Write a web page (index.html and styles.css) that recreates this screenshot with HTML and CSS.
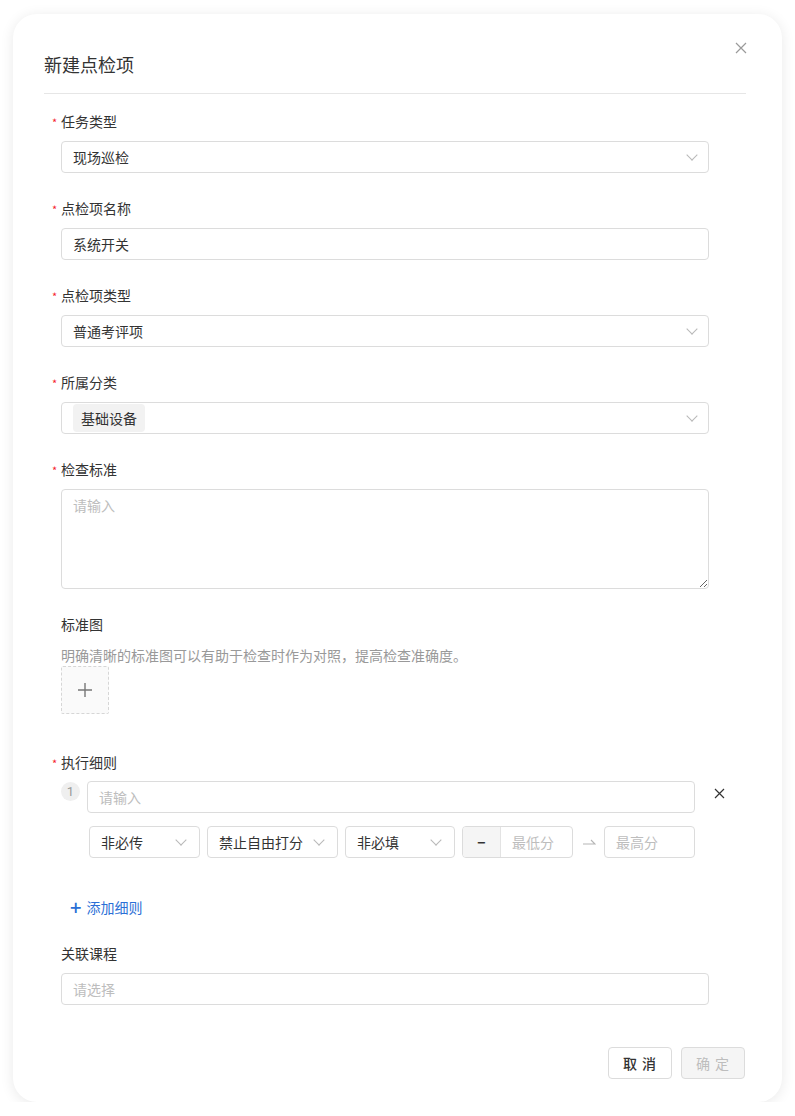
FILE: index.html
```html
<!DOCTYPE html>
<html lang="zh-CN">
<head>
<meta charset="utf-8">
<title>新建点检项</title>
<link rel="stylesheet" href="styles.css">
</head>
<body>
<div class="modal">
  <div class="modal-header">
    <h1 class="title">新建点检项</h1>
    <button class="close" aria-label="关闭">
      <svg width="12" height="12" viewBox="0 0 12 12"><path d="M1 1L11 11M11 1L1 11" stroke="#9a9a9a" stroke-width="1.2" fill="none"/></svg>
    </button>
  </div>
  <div class="form">
    <div class="field">
      <div class="label required">任务类型</div>
      <div class="control select"><span class="value">现场巡检</span><span class="chev"></span></div>
    </div>
    <div class="field">
      <div class="label required">点检项名称</div>
      <div class="control"><span class="value">系统开关</span></div>
    </div>
    <div class="field">
      <div class="label required">点检项类型</div>
      <div class="control select"><span class="value">普通考评项</span><span class="chev"></span></div>
    </div>
    <div class="field">
      <div class="label required">所属分类</div>
      <div class="control select tagbox"><span class="tag">基础设备</span><span class="chev"></span></div>
    </div>
    <div class="field">
      <div class="label required">检查标准</div>
      <textarea class="textarea" placeholder="请输入"></textarea>
    </div>
    <div class="field field-upload">
      <div class="label">标准图</div>
      <div class="desc">明确清晰的标准图可以有助于检查时作为对照，提高检查准确度。</div>
      <div class="upload">
        <svg width="16" height="16" viewBox="0 0 16 16"><path d="M8 1V15M1 8H15" stroke="#777" stroke-width="1.4" fill="none"/></svg>
      </div>
    </div>
    <div class="field field-rules">
      <div class="label required">执行细则</div>
      <div class="rule">
        <div class="rule-head">
          <span class="badge">1</span>
          <div class="control grow"><span class="placeholder">请输入</span></div>
          <button class="rule-del" aria-label="删除">
            <svg width="11" height="11" viewBox="0 0 11 11"><path d="M1 1L10 10M10 1L1 10" stroke="#333" stroke-width="1.2" fill="none"/></svg>
          </button>
        </div>
        <div class="rule-opts">
          <div class="control select w111"><span class="value">非必传</span><span class="chev"></span></div>
          <div class="control select w131"><span class="value">禁止自由打分</span><span class="chev"></span></div>
          <div class="control select w110"><span class="value">非必填</span><span class="chev"></span></div>
          <div class="control group w111"><span class="addon">−</span><span class="placeholder pad">最低分</span></div>
          <span class="arrow">
            <svg width="14" height="8" viewBox="0 0 14 8"><path d="M1 6H13L9 2" stroke="#b5b5b5" stroke-width="1.1" fill="none"/></svg>
          </span>
          <div class="control w91"><span class="placeholder">最高分</span></div>
        </div>
      </div>
      <a class="add-rule"><span class="plus">+</span>添加细则</a>
    </div>
    <div class="field">
      <div class="label">关联课程</div>
      <div class="control"><span class="placeholder">请选择</span></div>
    </div>
  </div>
  <div class="footer">
    <button class="btn">取 消</button>
    <button class="btn disabled">确 定</button>
  </div>
</div>
</body>
</html>
```

FILE: styles.css
```css
* { box-sizing: border-box; }
html, body { margin: 0; padding: 0; background: #fff; }
body {
  font-family: "Noto Sans CJK SC", "Noto Sans", sans-serif;
  color: #333;
  font-size: 14px;
}
.modal {
  position: relative;
  margin: 14px 0 0 13px;
  width: 769px;
  height: 1088px;
  background: #fff;
  border-radius: 24px;
  box-shadow: 0 2px 14px rgba(0, 0, 0, 0.09);
  display: flex;
  flex-direction: column;
  padding: 0 36px 0 31px;
}
.modal-header {
  padding: 37px 0 16px;
  border-bottom: 1px solid #e6e6e6;
}
.title {
  margin: 0;
  font-size: 18px;
  font-weight: 400;
  line-height: 26px;
  color: #333;
}
.close {
  position: absolute;
  top: 28px;
  right: 35px;
  width: 12px;
  height: 12px;
  padding: 0;
  border: 0;
  background: none;
  display: flex;
}
.form {
  padding: 16px 37px 0 17px;
}
.field { margin-bottom: 24px; }
.label {
  position: relative;
  line-height: 22px;
  height: 22px;
  margin-bottom: 9px;
  color: #333;
}
.label.required::before {
  content: "*";
  position: absolute;
  left: -9px;
  top: 5px;
  color: #f5222d;
  font-size: 11px;
  line-height: 14px;
}
.control {
  position: relative;
  height: 32px;
  border: 1px solid #dcdcdc;
  border-radius: 4px;
  display: flex;
  align-items: center;
  padding: 0 11px;
  background: #fff;
}
.value { color: #333; }
.placeholder { color: #bdbdbd; }
.chev {
  position: absolute;
  right: 12px;
  top: 50%;
  width: 8px;
  height: 8px;
  margin-top: -6px;
  border-right: 1px solid #b8b8b8;
  border-bottom: 1px solid #b8b8b8;
  transform: rotate(45deg);
}
.tagbox { padding-left: 11px; }
.tag {
  background: #f2f2f2;
  border-radius: 4px;
  height: 28px;
  line-height: 28px;
  padding: 0 8px;
  color: #333;
}
.textarea {
  display: block;
  width: 100%;
  height: 100px;
  border: 1px solid #dcdcdc;
  border-radius: 4px;
  padding: 4px 11px;
  font-family: inherit;
  font-size: 14px;
  line-height: 22px;
  color: #333;
  margin: 0;
}
.textarea::placeholder { color: #bdbdbd; }
.field-upload { margin-bottom: 37px; }
.desc {
  color: #999;
  line-height: 22px;
}
.upload {
  width: 48px;
  height: 48px;
  border: 1px dashed #d6d6d6;
  border-radius: 2px;
  background: #fafafa;
  display: flex;
  align-items: center;
  justify-content: center;
}
.field-rules { margin-bottom: 24px; }
.field-rules .label { margin-bottom: 8px; }
.rule-head {
  display: flex;
  align-items: flex-start;
  margin-right: -16px;
}
.badge {
  width: 19px;
  height: 19px;
  margin-top: 1px;
  border-radius: 50%;
  background: #efefef;
  color: #999;
  font-family: Roboto, "Noto Sans", sans-serif;
  font-size: 13px;
  line-height: 19px;
  text-align: center;
  flex: none;
  margin-right: 7px;
}
.grow { flex: 1; }
.rule-del {
  flex: none;
  width: 11px;
  height: 11px;
  padding: 0;
  margin: 7px 0 0 19px;
  border: 0;
  background: none;
  display: flex;
}
.rule-opts {
  display: flex;
  align-items: center;
  gap: 7px;
  margin: 13px 0 0 28px;
}
.w111 { width: 111px; flex: none; }
.w131 { width: 131px; flex: none; }
.w110 { width: 110px; flex: none; }
.w91 { width: 91px; flex: none; }
.rule-opts .select .chev { right: 14px; }
.group { padding: 0; overflow: hidden; }
.addon {
  width: 38px;
  height: 100%;
  background: #f5f5f5;
  border-right: 1px solid #e3e3e3;
  display: flex;
  align-items: center;
  justify-content: center;
  color: #333;
  font-weight: 700;
}
.pad { padding-left: 11px; }
.arrow {
  width: 17px;
  display: flex;
  justify-content: center;
  flex: none;
}
.add-rule {
  display: flex;
  align-items: center;
  margin: 38px 0 0 9px;
  line-height: 22px;
  color: #2b6fd6;
  cursor: pointer;
}
.plus {
  font-size: 20px;
  font-weight: 500;
  margin-right: 5px;
  line-height: 22px;
}
.footer {
  margin-top: auto;
  display: flex;
  justify-content: flex-end;
  gap: 9px;
  padding: 0 1px 23px 0;
}
.btn {
  width: 64px;
  height: 32px;
  border: 1px solid #dcdcdc;
  border-radius: 4px;
  background: #fff;
  font-family: inherit;
  font-size: 14px;
  color: #333;
  font-weight: 500;
  padding: 0;
  letter-spacing: 1px;
}
.btn.disabled {
  background: #f5f5f5;
  color: #bdbdbd;
  font-weight: 400;
}
```
